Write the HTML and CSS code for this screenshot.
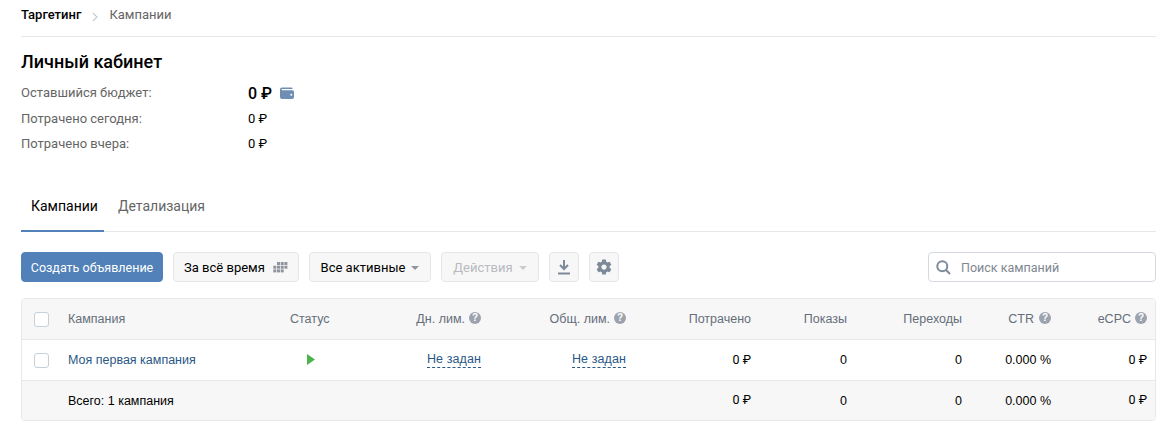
FILE: index.html
```html
<!DOCTYPE html>
<html lang="ru">
<head>
<meta charset="utf-8">
<title>Личный кабинет</title>
<link rel="stylesheet" href="styles.css">
</head>
<body>
<div class="page">
  <nav class="crumbs">
    <span class="crumb-root">Таргетинг</span>
    <svg class="crumb-sep" width="6" height="10" viewBox="0 0 6 10"><path d="M1 1l4 4-4 4" fill="none" stroke="#c5c9cf" stroke-width="1.1"/></svg>
    <span class="crumb-cur">Кампании</span>
  </nav>
  <h1 class="title">Личный кабинет</h1>
  <div class="stats">
    <div class="stat stat-main"><span class="stat-label">Оставшийся бюджет:</span><span class="stat-big">0 ₽</span>
      <svg class="wallet" width="14" height="12" viewBox="0 0 14 12"><path d="M2 .5h9.5a1 1 0 0 1 1 1V2H2.2a.6.6 0 0 0 0 1.2H12.5A1.5 1.5 0 0 1 14 4.7v5.3a2 2 0 0 1-2 2H2a2 2 0 0 1-2-2V2.500a2 2 0 0 1 2-2z" fill="#6f8eb4"/><circle cx="11.300" cy="7.800" r="1" fill="#fff"/></svg>
    </div>
    <div class="stat"><span class="stat-label">Потрачено сегодня:</span><span class="stat-val">0 ₽</span></div>
    <div class="stat"><span class="stat-label">Потрачено вчера:</span><span class="stat-val">0 ₽</span></div>
  </div>
  <div class="tabs">
    <span class="tab tab-active">Кампании</span>
    <span class="tab">Детализация</span>
  </div>
  <div class="toolbar">
    <button class="btn btn-primary">Создать объявление</button>
    <button class="btn btn-period">За всё время
      <svg width="15" height="11" viewBox="0 0 15 11" fill="#8f959c"><rect x="4" y="0" width="3" height="3"/><rect x="7.700" y="0" width="3" height="3"/><rect x="11.400" y="0" width="3" height="3"/><rect x="0.300" y="3.700" width="3" height="3"/><rect x="4" y="3.700" width="3" height="3"/><rect x="7.700" y="3.700" width="3" height="3"/><rect x="11.400" y="3.700" width="3" height="3"/><rect x="0.300" y="7.400" width="3" height="3"/><rect x="4" y="7.400" width="3" height="3"/><rect x="7.700" y="7.400" width="3" height="3"/></svg>
    </button>
    <button class="btn btn-filter">Все активные<span class="caret"></span></button>
    <button class="btn btn-disabled">Действия<span class="caret caret-light"></span></button>
    <button class="btn btn-icon">
      <svg width="12" height="15" viewBox="0 0 12 15" fill="none" stroke="#7d8a99" stroke-width="2"><path d="M6 0v8.500M2 5l4 4 4-4"/><path d="M0 13.500h12"/></svg>
    </button>
    <button class="btn btn-icon">
      <svg width="18" height="18" viewBox="0 0 24 24" fill="#7d8a99"><path d="M19.430 12.980c.04-.32.07-.64.07-.98s-.03-.66-.07-.98l2.110-1.650c.19-.15.24-.42.12-.64l-2-3.460c-.12-.22-.39-.3-.61-.22l-2.490 1c-.52-.4-1.080-.73-1.690-.98l-.38-2.650C14.460 2.180 14.250 2 14 2h-4c-.25 0-.46.18-.49.42l-.38 2.650c-.61.25-1.170.59-1.690.98l-2.490-1c-.23-.09-.49 0-.61.22l-2 3.460c-.13.22-.07.49.12.64l2.110 1.650c-.04.32-.07.65-.07.98s.03.66.07.98l-2.110 1.650c-.19.15-.24.42-.12.64l2 3.460c.12.22.39.3.61.22l2.490-1c.52.4 1.080.73 1.690.98l.38 2.650c.03.24.24.42.49.42h4c.25 0 .46-.18.49-.42l.38-2.650c.61-.25 1.170-.59 1.690-.98l2.490 1c.23.09.49 0 .61-.22l2-3.460c.12-.22.07-.49-.12-.64l-2.110-1.650zM12 15.500c-1.930 0-3.500-1.570-3.500-3.500s1.570-3.500 3.500-3.500 3.500 1.570 3.500 3.500-1.570 3.500-3.500 3.500z"/></svg>
    </button>
    <label class="search">
      <svg width="15" height="15" viewBox="0 0 15 15" fill="none" stroke="#7d8a99" stroke-width="2"><circle cx="6.300" cy="6.300" r="5"/><path d="M10 10l4 4"/></svg>
      <input class="search-input" type="text" placeholder="Поиск кампаний">
    </label>
  </div>
  <div class="table">
    <div class="row row-head">
      <span class="cell"><span class="check"></span></span>
      <span class="cell">Кампания</span>
      <span class="cell">Статус</span>
      <span class="cell num">Дн. лим.<span class="help">?</span></span>
      <span class="cell num">Общ. лим.<span class="help">?</span></span>
      <span class="cell num">Потрачено</span>
      <span class="cell num">Показы</span>
      <span class="cell num">Переходы</span>
      <span class="cell num">CTR<span class="help help-wide">?</span></span>
      <span class="cell num">eCPC<span class="help">?</span></span>
    </div>
    <div class="row row-body">
      <span class="cell"><span class="check"></span></span>
      <span class="cell link">Моя первая кампания</span>
      <span class="cell"><svg class="play" width="8" height="11" viewBox="0 0 8 11"><path d="M0 0l8 5.500L0 11z" fill="#4bb34b"/></svg></span>
      <span class="cell num"><span class="dashed">Не задан</span></span>
      <span class="cell num"><span class="dashed">Не задан</span></span>
      <span class="cell num money">0 ₽</span>
      <span class="cell num">0</span>
      <span class="cell num">0</span>
      <span class="cell num">0.000 %</span>
      <span class="cell num money">0 ₽</span>
    </div>
    <div class="row row-foot">
      <span class="cell"></span>
      <span class="cell">Всего: 1 кампания</span>
      <span class="cell"></span>
      <span class="cell"></span>
      <span class="cell"></span>
      <span class="cell num money">0 ₽</span>
      <span class="cell num">0</span>
      <span class="cell num">0</span>
      <span class="cell num">0.000 %</span>
      <span class="cell num money">0 ₽</span>
    </div>
  </div>
</div>
</body>
</html>
```
FILE: styles.css
```css
* { box-sizing: border-box; }
html, body { margin: 0; background: #fff; }
body { font-family: Roboto, "Liberation Sans", sans-serif; font-size: 13px; color: #000; }
.page { width: 1156px; padding-left: 21px; height: 448px; overflow: hidden; }

.crumbs { height: 37px; border-bottom: 1px solid #e7e8ec; display: flex; align-items: flex-start; padding-top: 7px; line-height: 15px; }
.crumb-root { font-weight: 500; }
.crumb-sep { margin: 5px 11px 0 11px; }
.crumb-cur { color: #656565; }

.title { margin: 14px 0 0; font-size: 18px; font-weight: 500; line-height: 22px; }

.stats { margin-top: 6px; color: #656565; }
.stat { display: flex; align-items: center; height: 25px; }
.stat-main { height: 27px; }
.stat-label { width: 227px; }
.stat-val { color: #000; }
.stat-big { color: #000; font-size: 16px; font-weight: 500; padding-top: 2px; }
.wallet { margin-left: 8px; }

.tabs { display: flex; margin-top: 37px; height: 39px; border-bottom: 1px solid #e7e8ec; font-size: 14px; }
.tab { padding: 0 6px; margin-right: 2px; color: #656565; height: 39px; line-height: 26px; }
.tab:first-child { padding: 0 6px 0 10px; margin-right: 8px; }
.tab-active { color: #000; border-bottom: 2px solid #5181b8; }

.toolbar { display: flex; align-items: center; margin-top: 20px; height: 30px; gap: 10px; }
.btn { height: 30px; border: 1px solid #e4e6e9; border-radius: 4px; background: #f7f7f7; font: inherit; color: #000; padding: 0; display: flex; align-items: center; justify-content: center; }
.btn-primary { width: 142px; background: #5181b8; border-color: #5181b8; color: #fff; font-size: 12.500px; }
.btn-period { width: 126px; gap: 8px; }
.btn-filter { width: 122px; }
.btn-disabled { width: 98px; color: #b8bbbf; }
.btn-icon { width: 30px; }
.caret { width: 0; height: 0; margin-left: 6px; margin-top: 2px; border: 4px solid transparent; border-top-color: #8f959c; border-bottom: 0; }
.caret-light { border-top-color: #c9cbce; }
.search { margin-left: auto; width: 228px; height: 30px; border: 1px solid #d3d9de; border-radius: 4px; display: flex; align-items: center; padding-left: 7px; }
.search-input { border: 0; outline: 0; padding: 0; margin-left: 10px; width: 190px; font: inherit; font-size: 12.500px; background: transparent; }
.search-input::placeholder { color: #7f8790; opacity: 1; }

.table { margin-top: 16px; width: 1135px; border: 1px solid #e7e8ec; border-radius: 4px; overflow: hidden; font-family: "Liberation Sans", Arial, sans-serif; font-size: 12.500px; }
.row { display: grid; grid-template-columns: 46px 222px 80px 111px 145px 125px 96px 115px 89px 96px; padding-right: 8px; align-items: center; }
.row-head { height: 41px; background: #f7f7f7; border-bottom: 1px solid #e7e8ec; color: #656e7a; }
.row-body { height: 41px; border-bottom: 1px solid #e7e8ec; }
.row-foot { height: 39px; background: #f7f7f7; }
.cell { display: flex; align-items: center; white-space: nowrap; }
.num { justify-content: flex-end; }
.money { font-family: Roboto, "Liberation Sans", sans-serif; padding-bottom: 2px; }
.check { width: 15px; height: 15px; margin-left: 12px; background: #fff; border: 1px solid #c5d0db; border-radius: 3px; }
.help { width: 12px; height: 12px; margin: -3px 0 0 4px; border-radius: 50%; background: #9da3ae; color: #fff; font-size: 10px; font-weight: 700; line-height: 12px; text-align: center; }
.help-wide { margin-left: 5px; }
.link { color: #2a5885; }
.play { margin: -2px 0 0 17px; }
.dashed { color: #2a5885; border-bottom: 1px dashed #2a5885; line-height: 15px; letter-spacing: .1px; }
```
